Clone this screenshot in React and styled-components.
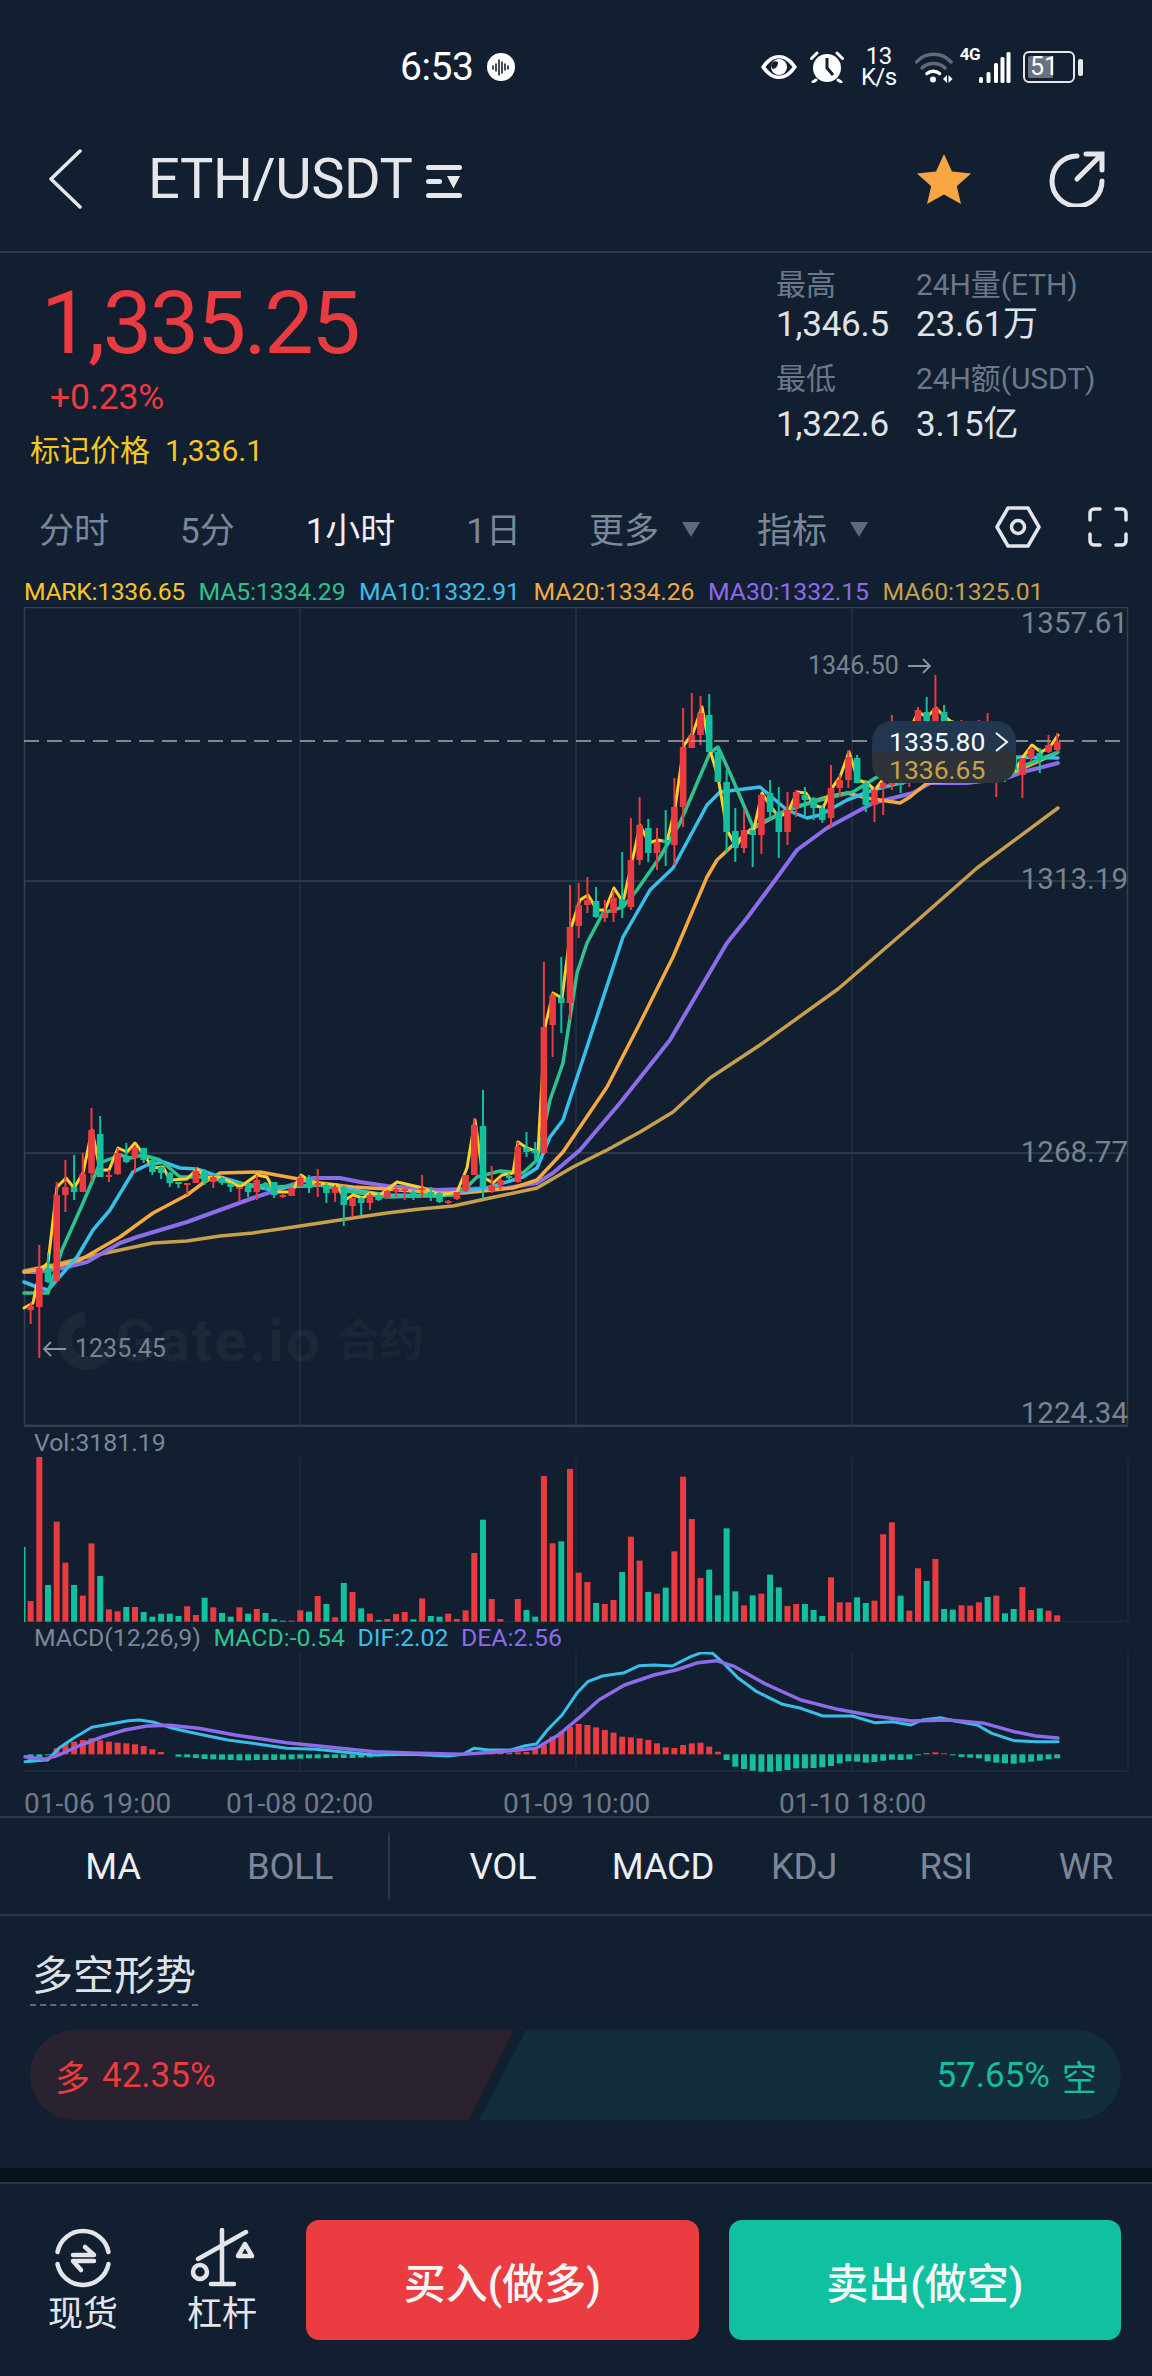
import React from 'react';
import styled, { createGlobalStyle } from 'styled-components';

const BG = '#121f30';
const LINE = '#2a3748';
const GRID = '#334052';
const FAINT = '#1e2b3d';
const MUTED = '#7b8798';
const TEXT = '#e3e5e8';
const RED = '#e93b40';
const GREEN = '#12bf9f';
const COLORS = { r: '#e93b40', g: '#13bf9d' };

const GlobalStyle = createGlobalStyle`
  html, body { margin: 0; padding: 0; background: ${BG}; }
  body {
    font-family: Roboto, "Noto Sans CJK SC", sans-serif;
    color: ${TEXT};
  }
`;

const Page = styled.div`
  width: 1152px;
  height: 2376px;
  overflow: hidden;
  background: ${BG};
  display: flex;
  flex-direction: column;
`;

/* status bar */
const StatusBar = styled.div`
  height: 112px;
  flex: none;
  display: flex;
  align-items: center;
  padding: 22px 69px 0 400px;
  box-sizing: border-box;
  color: #fff;
`;

const Clock = styled.span`
  font-size: 39px;
  line-height: 46px;
  letter-spacing: -0.4px;
`;

const StatusIcons = styled.div`
  margin-left: auto;
  display: flex;
  align-items: center;
`;

const Speed = styled.div`
  width: 36px;
  margin: 0 18px 0 17px;
  font-size: 24px;
  line-height: 21px;
  text-align: center;
  letter-spacing: -0.6px;
`;

const NetType = styled.span`
  font-size: 17px;
  font-weight: 700;
  line-height: 14px;
  align-self: flex-start;
  margin: 1px 0 0 7px;
  letter-spacing: -0.5px;
`;

const Battery = styled.div`
  width: 52px;
  height: 32px;
  margin-left: 12px;
  padding: 3px;
  box-sizing: border-box;
  border: 2.5px solid #e4e6e9;
  border-radius: 6px;
  display: flex;
`;

const BatteryLevel = styled.span`
  flex: 1;
  border-radius: 2px;
  background: linear-gradient(90deg, #687180 ${p => p.$level}%, transparent ${p => p.$level}%);
  font-size: 25px;
  line-height: 21px;
  padding-left: 2px;
`;

const BatteryTip = styled.span`
  width: 5px;
  height: 17px;
  margin-left: 3px;
  border-radius: 2px;
  background: #e4e6e9;
`;

/* title bar */
const Header = styled.header`
  height: 141px;
  flex: none;
  box-sizing: border-box;
  border-bottom: 2px solid ${LINE};
  display: flex;
  align-items: center;
  padding: 0 47px 6px 47px;
`;

const Title = styled.h1`
  margin: 0 13px 0 65px;
  font-size: 56px;
  font-weight: 400;
  letter-spacing: -0.4px;
  line-height: 64px;
  color: #e5e7ea;
`;

const HeaderActions = styled.div`
  margin-left: auto;
  display: flex;
  align-items: center;
  gap: 78px;
`;

/* price block */
const Ticker = styled.section`
  height: 244px;
  flex: none;
  display: flex;
  justify-content: space-between;
  box-sizing: border-box;
`;

const PriceColumn = styled.div`
  padding: 26px 0 0 30px;
`;

const Price = styled.div`
  font-size: 88px;
  line-height: 88px;
  letter-spacing: -2.5px;
  color: ${RED};
  margin-left: 11px;
`;

const Change = styled.div`
  font-size: 35.5px;
  line-height: 40px;
  color: ${RED};
  margin: 10px 0 0 20px;
  letter-spacing: -0.2px;
`;

const MarkPrice = styled.div`
  margin-top: 14px;
  font-size: 30px;
  line-height: 40px;
  color: #f6c623;
  display: flex;
  gap: 15px;
`;

const Stats = styled.div`
  width: 376px;
  padding-top: 12px;
  display: grid;
  grid-template-columns: 140px 1fr;
  grid-template-rows: 40px 40px 40px 40px;
`;

const StatLabel = styled.div`
  font-size: 30px;
  line-height: 40px;
  color: #6c7889;
  white-space: nowrap;
  margin-top: ${p => (p.$lower ? '14px' : '0')};
  letter-spacing: -0.1px;
`;

const StatValue = styled.div`
  font-size: 35px;
  line-height: 40px;
  color: #e0e3e6;
  white-space: nowrap;
  margin-top: ${p => (p.$lower ? '20px' : '0')};
  letter-spacing: -0.2px;
`;

/* period tabs */
const Tabs = styled.nav`
  height: 63px;
  flex: none;
  display: flex;
  align-items: center;
  gap: 71px;
  padding: 0 24px 3px 39px;
  box-sizing: border-box;
  font-size: 35px;
`;

const Tab = styled.span`
  color: ${p => (p.$active ? '#eceef0' : MUTED)};
  display: flex;
  align-items: center;
  margin-left: ${p => p.$shift || 0}px;
`;

const Caret = styled.i`
  width: 0;
  height: 0;
  margin: 4px 0 0 23px;
  border-left: 9.5px solid transparent;
  border-right: 9.5px solid transparent;
  border-top: 15px solid #5d6a7c;
`;

const TabTools = styled.div`
  margin-left: auto;
  display: flex;
  align-items: center;
  gap: 47px;
`;

/* MA legend */
const Legend = styled.div`
  height: 47px;
  flex: none;
  display: flex;
  align-items: flex-end;
  gap: 13.6px;
  padding-left: 24px;
  box-sizing: border-box;
  font-size: 24.8px;
  line-height: 30px;
  letter-spacing: -0.1px;
`;

const LegendItem = styled.span`
  color: ${p => p.$color};
  letter-spacing: ${p => p.$spacing || -0.1}px;
`;

/* charts */
const MainChart = styled.div`
  position: relative;
  height: 820px;
  flex: none;
`;

const ChartSvg = styled.svg`
  display: block;
  width: 1152px;
  height: ${p => p.$height}px;
`;

const AxisLabel = styled.span`
  position: absolute;
  right: 24px;
  top: ${p => p.$top}px;
  font-size: 29.5px;
  line-height: 32px;
  color: #78838f;
`;

const PriceNote = styled.span`
  position: absolute;
  left: ${p => p.$left}px;
  top: ${p => p.$top}px;
  font-size: 25px;
  line-height: 30px;
  color: #78838f;
  display: flex;
  align-items: center;
  gap: 9px;
  white-space: nowrap;
`;

const Watermark = styled.div`
  position: absolute;
  left: 55px;
  top: 704px;
  display: flex;
  align-items: center;
  color: rgba(255, 255, 255, 0.045);
  font-size: 60px;
  font-weight: 700;
  line-height: 60px;
  letter-spacing: 2px;
  gap: 4px;
`;

const WatermarkCn = styled.span`
  margin-left: 10px;
  font-size: 44px;
  letter-spacing: 0;
`;

const LastPrice = styled.div`
  position: absolute;
  left: 872px;
  top: 114px;
  width: 144px;
  border-radius: 20px;
  overflow: hidden;
  font-size: 26.5px;
  line-height: 21px;
`;

const LastRow = styled.div`
  height: 31px;
  box-sizing: border-box;
  display: flex;
  align-items: center;
  padding: ${p => p.$pad}px 0 0 17px;
  gap: 9px;
  background: ${p => p.$bg};
  color: ${p => p.$color};
`;

const PanelLabel = styled.div`
  height: ${p => p.$height}px;
  flex: none;
  display: flex;
  align-items: center;
  gap: 12.5px;
  padding-left: 34px;
  box-sizing: border-box;
  font-size: 24.8px;
  color: ${MUTED};
`;

const PanelValue = styled.span`
  color: ${p => p.$color};
`;

const TimeAxis = styled.div`
  height: 46px;
  flex: none;
  box-sizing: border-box;
  padding: 14px 0 0 24px;
  display: grid;
  grid-template-columns: 202px 277px 276px 1fr;
  font-size: 28px;
  line-height: 36px;
  color: #6f7b8b;
  border-bottom: 2px solid ${LINE};
`;

/* indicator switch */
const Indicators = styled.div`
  height: 98px;
  flex: none;
  box-sizing: border-box;
  padding-left: 24px;
  border-bottom: 2px solid ${LINE};
  display: grid;
  grid-template-columns: 178px 176px 38px 174px 146px 136px 148px 132px;
  align-items: center;
  font-size: 36.5px;
`;

const Indicator = styled.span`
  justify-self: center;
  letter-spacing: -0.3px;
  color: ${p => (p.$active ? '#eceef0' : MUTED)};
`;

const IndicatorDivider = styled.i`
  width: 2px;
  height: 66px;
  margin-left: 10px;
  background: ${LINE};
`;

/* long short */
const Sentiment = styled.section`
  height: 252px;
  flex: none;
  box-sizing: border-box;
  padding: 34px 31px 0 30px;
`;

const SentimentTitle = styled.h2`
  display: inline-block;
  margin: 0;
  padding: 0 2px 2px;
  font-size: 41px;
  font-weight: 400;
  line-height: 52px;
  color: #dfe2e6;
  border-bottom: 2px dashed #5f6b7c;
`;

const RatioBar = styled.div`
  margin-top: 24px;
  height: 90px;
  display: flex;
  font-size: 35px;
`;

const RatioLong = styled.div`
  width: 484px;
  flex: none;
  display: flex;
  align-items: center;
  gap: 12px;
  padding-left: 25px;
  box-sizing: border-box;
  border-radius: 45px 0 0 45px;
  background: #2a222f;
  color: ${RED};
  clip-path: polygon(0 0, 100% 0, calc(100% - 45px) 100%, 0 100%);
`;

const RatioShort = styled.div`
  flex: 1;
  margin-left: -35px;
  display: flex;
  align-items: center;
  justify-content: flex-end;
  gap: 12px;
  padding-right: 24px;
  border-radius: 0 45px 45px 0;
  background: #122d3b;
  color: ${GREEN};
  clip-path: polygon(47px 0, 100% 0, 100% 100%, 0 100%);
`;

/* bottom bar */
const Strip = styled.div`
  height: 14px;
  flex: none;
  background: #07121f;
  border-bottom: 2px solid ${LINE};
`;

const Footer = styled.footer`
  flex: 1;
  display: flex;
  align-items: flex-start;
  padding: 36px 31px 0 0;
`;

const FooterLinks = styled.div`
  display: flex;
  flex: none;
  padding: 8px 0 0 47px;
  margin-right: 48px;
  gap: 67px;
`;

const FooterLink = styled.div`
  width: 72px;
  display: flex;
  flex-direction: column;
  align-items: center;
  font-size: 35px;
  line-height: 40px;
  color: #e3e5e8;
  gap: 7px;
`;

const TradeButton = styled.button`
  flex: 1;
  height: 120px;
  border: 0;
  border-radius: 13px;
  padding: 0;
  background: ${p => p.$bg};
  color: #f4f6f6;
  font-family: inherit;
  font-size: 42px;
  font-weight: 500;
  & + & { margin-left: 30px; }
`;

/* candles: [wick top, wick bottom, body top, body bottom, side], y in page pixels */
const CANDLES = [
  [1303,1324,1306,1310,'r'],[1245,1358,1268,1307,'r'],[1253,1283,1268,1282,'g'],[1182,1282,1195,1281,'r'],
  [1160,1212,1187,1195,'r'],[1155,1200,1187,1192,'g'],[1153,1192,1174,1192,'r'],[1108,1182,1130,1173,'r'],
  [1116,1177,1134,1177,'g'],[1170,1182,1175,1177,'r'],[1148,1175,1153,1174,'r'],[1143,1163,1157,1162,'g'],
  [1145,1173,1148,1158,'r'],[1148,1163,1148,1160,'g'],[1158,1175,1160,1172,'g'],[1165,1179,1167,1173,'g'],
  [1172,1187,1173,1183,'g'],[1182,1188,1182,1184,'g'],[1183,1195,1183,1185,'r'],[1167,1183,1171,1183,'r'],
  [1169,1185,1172,1182,'g'],[1175,1188,1177,1182,'r'],[1177,1185,1178,1183,'g'],[1183,1192,1184,1187,'g'],
  [1187,1202,1187,1189,'r'],[1183,1197,1187,1192,'g'],[1175,1200,1180,1192,'r'],[1182,1190,1183,1187,'g'],
  [1182,1198,1182,1195,'g'],[1193,1198,1195,1197,'r'],[1188,1196,1188,1196,'r'],[1175,1187,1178,1186,'r'],
  [1175,1193,1177,1188,'g'],[1169,1197,1183,1185,'r'],[1183,1203,1185,1193,'g'],[1185,1202,1187,1193,'r'],
  [1185,1226,1187,1205,'g'],[1198,1217,1198,1206,'r'],[1197,1215,1198,1203,'g'],[1193,1210,1195,1203,'r'],
  [1193,1201,1195,1200,'g'],[1190,1198,1191,1198,'r'],[1188,1197,1189,1191,'r'],[1188,1200,1189,1191,'r'],
  [1190,1200,1192,1197,'g'],[1175,1198,1188,1190,'r'],[1187,1201,1192,1195,'g'],[1192,1203,1193,1202,'g'],
  [1200,1204,1201,1203,'r'],[1192,1200,1192,1199,'r'],[1175,1192,1175,1191,'r'],[1118,1175,1125,1175,'r'],
  [1090,1199,1126,1188,'g'],[1166,1193,1186,1191,'r'],[1178,1190,1180,1185,'r'],[1173,1180,1176,1177,'g'],
  [1142,1183,1147,1182,'r'],[1132,1157,1148,1152,'g'],[1142,1163,1150,1153,'g'],[962,1153,1027,1153,'r'],
  [993,1057,995,1025,'r'],[957,1033,998,1003,'g'],[885,1020,927,1003,'r'],[883,938,905,926,'r'],
  [877,913,900,905,'r'],[887,918,901,917,'g'],[900,922,913,918,'r'],[890,922,898,913,'r'],
  [852,918,899,907,'g'],[818,910,860,907,'r'],[797,865,825,860,'r'],[819,862,828,853,'g'],
  [828,870,842,853,'r'],[810,866,840,843,'g'],[778,865,807,845,'r'],[708,827,747,807,'r'],
  [693,748,735,748,'r'],[696,745,713,735,'r'],[694,752,715,752,'g'],[747,782,752,782,'g'],
  [770,853,782,832,'g'],[808,862,831,848,'g'],[810,853,830,848,'r'],[830,867,830,835,'g'],
  [794,854,795,835,'r'],[780,820,793,812,'g'],[787,858,812,832,'g'],[792,845,810,832,'r'],
  [790,817,792,808,'r'],[787,817,795,800,'g'],[797,820,798,808,'g'],[805,823,808,820,'g'],
  [765,828,788,818,'r'],[775,797,780,788,'r'],[750,788,757,780,'r'],[755,783,758,783,'g'],
  [780,812,783,805,'g'],[787,822,790,805,'r'],[780,815,783,788,'r'],[715,790,730,785,'r'],
  [740,793,750,785,'g'],[760,787,765,780,'r'],[707,745,710,722,'r'],[697,745,712,722,'g'],
  [675,745,708,722,'r'],[705,745,712,722,'g'],[720,760,725,750,'g'],[720,770,730,760,'r'],
  [730,765,735,755,'r'],[720,760,730,750,'r'],[713,755,725,745,'r'],[750,797,755,770,'r'],
  [755,782,760,775,'g'],[750,775,755,770,'g'],[758,798,758,775,'r'],[747,762,749,758,'r'],
  [748,773,753,760,'g'],[735,753,745,752,'r'],[733,752,742,750,'r'],
];

const candleX = i => 30.6 + 8.7 * i;

const MA60 = [[24,1271],[53,1265],[87,1257],[120,1250],[153,1243],[187,1241],[220,1236],[253,1233],[287,1228],[320,1223],[353,1218],[387,1213],[420,1209],[453,1206],[490,1198],[537,1188],[573,1167],[607,1150],[640,1132],[673,1112],[710,1078],[760,1045],[838,989],[918,920],[977,868],[1058,808]];
const MA30 = [[24,1272],[37,1272],[63,1268],[87,1262],[120,1243],[137,1237],[187,1222],[220,1210],[253,1198],[277,1190],[297,1183],[313,1178],[340,1178],[360,1182],[387,1186],[437,1190],[463,1189],[507,1188],[537,1183],[553,1173],[580,1150],[620,1103],[670,1040],[707,977],[727,943],[747,918],[773,883],[797,850],[827,828],[873,803],[913,793],[930,783],[967,783],[1007,778],[1023,772],[1058,763]];
const MA20 = [[24,1272],[53,1267],[80,1260],[120,1237],[153,1213],[187,1195],[203,1183],[220,1173],[260,1172],[293,1178],[320,1183],[353,1187],[387,1189],[437,1193],[463,1193],[513,1188],[537,1180],[563,1152],[607,1087],[640,1023],[673,957],[707,877],[717,860],[733,845],[750,830],[787,810],[827,797],[847,793],[867,798],[900,803],[910,797],[927,783],[1003,777],[1057,753]];
const MA10 = [[24,1282],[37,1287],[48,1290],[63,1273],[77,1257],[93,1230],[110,1210],[133,1172],[147,1165],[163,1162],[180,1168],[197,1169],[220,1177],[247,1185],[273,1190],[287,1187],[320,1185],[353,1190],[387,1195],[437,1196],[453,1193],[487,1188],[523,1177],[537,1168],[550,1137],[563,1120],[587,1047],[623,937],[650,890],[673,868],[707,805],[720,792],[760,787],[787,810],[807,818],[820,815],[847,800],[873,790],[900,783],[1020,757],[1058,758]];
const MA5 = [[24,1293],[48,1293],[62,1250],[83,1203],[100,1163],[120,1155],[130,1158],[143,1155],[160,1160],[180,1177],[207,1177],[233,1183],[273,1187],[320,1185],[353,1192],[387,1197],[453,1195],[467,1187],[477,1177],[500,1171],[523,1173],[537,1160],[550,1100],[563,1063],[577,973],[587,943],[603,913],[623,907],[637,890],[660,857],[680,823],[710,753],[718,747],[730,773],[753,827],[787,810],[820,800],[853,792],[877,777],[1013,770],[1058,752]];
const MARK = [[24,1308],[33,1303],[40,1270],[48,1263],[57,1187],[66,1178],[74,1188],[83,1173],[92,1130],[100,1170],[109,1170],[118,1148],[127,1152],[135,1143],[144,1155],[153,1168],[163,1167],[170,1180],[187,1179],[197,1169],[205,1177],[223,1178],[240,1187],[257,1175],[267,1177],[275,1192],[292,1192],[301,1175],[313,1183],[337,1185],[345,1200],[353,1195],[363,1198],[370,1193],[380,1195],[397,1182],[423,1188],[440,1195],[457,1192],[467,1168],[475,1120],[483,1177],[493,1183],[502,1175],[513,1173],[518,1142],[527,1148],[538,1152],[545,1027],[553,993],[562,998],[571,928],[580,900],[588,895],[597,910],[605,910],[614,888],[623,902],[632,862],[640,825],[649,843],[658,840],[667,842],[675,808],[684,745],[693,733],[702,707],[710,750],[718,777],[727,830],[736,847],[745,832],[753,833],[762,793],[771,807],[779,817],[788,812],[797,792],[806,793],[814,805],[823,808],[832,788],[840,777],[849,752],[858,780],[867,783],[875,790],[884,778],[893,767],[918,712],[927,717],[936,708],[945,717],[1015,770],[1023,757],[1032,745],[1041,752],[1050,747],[1058,735]];

// volume tops and macd values were read at 3x of the panel
const VOL_TOPS = [543,110,495,305,428,495,527,370,468,568,574,561,561,576,590,581,581,588,559,585,533,562,579,590,562,581,567,579,597,602,602,571,575,528,552,592,489,516,565,581,600,597,582,576,598,535,588,590,581,597,571,399,299,537,597,605,537,570,590,168,370,364,147,458,486,549,552,540,456,350,422,516,521,503,394,170,297,474,449,526,325,514,556,526,521,464,502,558,552,552,570,588,472,547,547,532,549,542,343,307,527,572,445,483,417,567,569,556,557,547,531,527,580,567,501,570,565,572,586];
const VOL_GREEN = new Set([2,5,8,11,13,14,15,16,17,20,22,23,25,27,28,29,32,34,36,38,40,44,46,47,52,57,58,61,65,68,71,73,78,79,80,81,83,85,86,89,90,91,95,96,100,103,105,106,110,112,113,116]);

const MACD_TOPS = [1020,1018,1006,985,972,965,960,955,961,965,968,970,973,978,988,996,1003,1010,1012,1014,1017,1018,1019,1020,1021,1021,1020,1020,1020,1019,1018,1016,1015,1015,1014,1014,1014,1014,1013,1012,1009,1008,1007,1005,1005,1005,1005,1005,1005,1005,1005,1003,1000,999,998,998,997,996,990,975,950,935,920,912,915,922,930,938,950,952,955,960,970,982,984,975,970,968,980,995,1020,1040,1047,1052,1055,1055,1053,1050,1045,1045,1044,1042,1038,1030,1024,1025,1028,1026,1022,1019,1020,1018,1006,999,997,1000,1006,1011,1013,1015,1024,1028,1030,1031,1028,1025,1022,1018,1015];

const DIF = [[34,1025],[50,1022],[65,1020],[80,985],[100,955],[125,922],[150,912],[175,902],[190,900],[210,907],[235,925],[270,942],[310,960],[350,972],[390,985],[430,988],[470,997],[510,1005],[560,1003],[610,1008],[630,1003],[645,985],[665,990],[695,990],[715,977],[730,972],[745,930],[765,885],[785,820],[800,785],[820,768],[850,758],[870,737],[890,735],[915,738],[940,710],[955,698],[970,700],[985,730],[1005,775],[1030,815],[1065,853],[1090,865],[1120,888],[1160,888],[1190,908],[1215,905],[1240,915],[1255,900],[1280,893],[1300,903],[1330,915],[1350,940],[1380,962],[1410,965],[1440,965]];
const DEA = [[34,1010],[60,1018],[80,1005],[110,975],[140,950],[170,930],[200,918],[230,916],[270,925],[320,945],[390,968],[450,982],[510,995],[570,1000],[630,1003],[680,995],[730,985],[760,945],[790,890],[815,840],[850,795],[890,765],[920,750],[950,728],[975,722],[1000,740],[1040,790],[1090,840],[1140,868],[1190,888],[1240,903],[1290,900],[1340,910],[1380,935],[1410,948],[1440,954]];

const panelPoint = ([x, y]) => [x / 1.361, 1420 + y / 3];
const toPoints = pts => pts.map(p => p.join(',')).join(' ');

const Line = ({ points, color, width = 3.5 }) => (
  <polyline points={toPoints(points)} fill="none" stroke={color} strokeWidth={width} strokeLinejoin="round" strokeLinecap="round" />
);

const VerticalGrid = ({ top, bottom, color }) => (
  <>
    {[300, 576, 852].map(x => <line key={x} x1={x} x2={x} y1={top} y2={bottom} stroke={color} strokeWidth="1.5" />)}
  </>
);

const CandleChart = () => (
  <ChartSvg $height={820} viewBox="0 607 1152 820">
    <VerticalGrid top={607} bottom={1426} color="#243144" />
    <rect x="24.5" y="607.5" width="1103" height="818" fill="none" stroke={GRID} strokeWidth="1.5" />
    <line x1="24" x2="1128" y1="881" y2="881" stroke={GRID} strokeWidth="1.5" />
    <line x1="24" x2="1128" y1="1153" y2="1153" stroke={GRID} strokeWidth="1.5" />
    <line x1="24" x2="1128" y1="1426" y2="1426" stroke={GRID} strokeWidth="2.5" />
    <Line points={MA60} color="#c7a04c" />
    <Line points={MA30} color="#8c6ce9" width={4} />
    <Line points={MA20} color="#f5a93e" />
    <Line points={MA10} color="#37c0e9" />
    <Line points={MA5} color="#2ec28e" />
    <Line points={MARK} color="#fdd02c" width={3} />
    {CANDLES.map(([wt, wb, bt, bb, side], i) => (
      <g key={i} fill={COLORS[side]}>
        <rect x={candleX(i) - 1} y={wt} width="2" height={wb - wt} />
        <rect x={candleX(i) - 3.3} y={bt} width="6.6" height={Math.max(bb - bt, 2)} />
      </g>
    ))}
    <line x1="24" x2="1124" y1="741" y2="741" stroke="#a3aab2" strokeWidth="1.5" strokeDasharray="15 8" />
  </ChartSvg>
);

const VolumeChart = () => (
  <ChartSvg $height={165} viewBox="0 1457 1152 165">
    <VerticalGrid top={1457} bottom={1622} color={FAINT} />
    <line x1="1128" x2="1128" y1="1457" y2="1622" stroke={FAINT} strokeWidth="1.5" />
    <line x1="24" x2="1128" y1="1621.5" y2="1621.5" stroke={FAINT} strokeWidth="1.5" />
    <rect x="24" y="1547" width="1.5" height="75" fill={COLORS.g} />
    {VOL_TOPS.map((t, i) => (
      <rect key={i} x={candleX(i) - 3} y={1420 + t / 3} width="6" height={(605 - t) / 3} fill={VOL_GREEN.has(i) ? COLORS.g : COLORS.r} />
    ))}
  </ChartSvg>
);

const MacdChart = () => (
  <ChartSvg $height={120} viewBox="0 1652 1152 120">
    <VerticalGrid top={1652} bottom={1772} color={FAINT} />
    <line x1="1128" x2="1128" y1="1652" y2="1772" stroke={FAINT} strokeWidth="1.5" />
    <line x1="24" x2="1128" y1="1771" y2="1771" stroke={FAINT} strokeWidth="2" />
    {MACD_TOPS.map((t, i) => {
      const y = 1420 + t / 3;
      const zero = 1420 + 1003 / 3;
      return (
        <rect
          key={i}
          x={candleX(i) - 3}
          y={Math.min(y, zero)}
          width="6"
          height={Math.abs(y - zero)}
          fill={t > 1003 ? COLORS.g : COLORS.r}
        />
      );
    })}
    <Line points={DIF.map(panelPoint)} color="#37bfe8" width={3} />
    <Line points={DEA.map(panelPoint)} color="#8c6ce9" />
  </ChartSvg>
);

/* icons */
const EyeIcon = () => (
  <svg width="38" height="26" viewBox="0 0 38 26">
    <path d="M1 13C7 4 13 1 19 1s12 3 18 12c-6 9-12 12-18 12S7 22 1 13z" fill="#fff" />
    <path d="M5.500 13C10 7 14 4.500 19 4.500S28 7 32.500 13C28 19 24 21.500 19 21.500S10 19 5.500 13z" fill={BG} />
    <circle cx="19" cy="13" r="8" fill="#fff" />
    <path d="M13 15a6 6 0 0 0 5-7 4 4 0 0 0-5 7z" fill={BG} />
  </svg>
);

const AlarmIcon = () => (
  <svg width="34" height="32" viewBox="0 0 34 32" style={{ marginLeft: 12 }}>
    <circle cx="17" cy="17" r="14" fill="#fff" />
    <path d="M17 7v10l6 7" fill="none" stroke={BG} strokeWidth="3" />
    <path d="M1.500 7.500 7 2M32.500 7.500 27 2M6 29l-3 2M28 29l3 2" stroke="#fff" strokeWidth="3" strokeLinecap="round" />
  </svg>
);

const WifiIcon = () => (
  <svg width="38" height="31" viewBox="0 0 38 31">
    <path d="M1.500 10C10-.5 27-.5 36 10" fill="none" stroke="#5f6978" strokeWidth="3.500" strokeLinecap="round" />
    <path d="M7 16c6-6 17-6 23 0" fill="none" stroke="#5f6978" strokeWidth="3.500" strokeLinecap="round" />
    <path d="M12 21.500c3.500-3 9-3 12.500 0" fill="none" stroke="#fff" strokeWidth="3.500" strokeLinecap="round" />
    <circle cx="18" cy="27.500" r="3" fill="#fff" />
    <path d="M28 27l4-4v8zM33.500 23l4 4-4 4z" fill="#fff" />
  </svg>
);

const SignalIcon = () => (
  <svg width="33" height="31" viewBox="0 0 33 31" style={{ marginLeft: -2 }}>
    {[[1, 6], [8.500, 11], [16, 20], [22.500, 26], [28.500, 31]].map(([x, h]) => (
      <rect key={x} x={x} y={31 - h} width="4" height={h} rx="1.500" fill="#fff" />
    ))}
  </svg>
);

const VoiceBadge = () => (
  <svg width="28" height="28" viewBox="0 0 28 28" style={{ marginLeft: 13 }}>
    <circle cx="14" cy="14" r="14" fill="#fff" />
    <path d="M6 13v3M9 11v7M12 7v15M15 9v11M18 11v6M21 13v3" stroke={BG} strokeWidth="1.600" strokeLinecap="round" />
  </svg>
);

const BackIcon = () => (
  <svg width="36" height="60" viewBox="0 0 36 60">
    <path d="M33 2 4 30l29 28" fill="none" stroke="#e6e8eb" strokeWidth="3.500" strokeLinecap="round" strokeLinejoin="round" />
  </svg>
);

const MarketMenuIcon = () => (
  <svg width="37" height="36" viewBox="0 0 37 36" style={{ marginTop: 4 }}>
    <rect x="0" y="2" width="36" height="5" rx="2.500" fill="#e6e8eb" />
    <rect x="0" y="16" width="16" height="5" rx="2.500" fill="#e6e8eb" />
    <rect x="0" y="30" width="36" height="5" rx="2.500" fill="#e6e8eb" />
    <path d="M21 13h13l-6.500 12.500z" fill="#e6e8eb" />
  </svg>
);

const StarIcon = () => (
  <svg width="54" height="50" viewBox="0 0 54 50">
    <path d="M27 0l8 17.500 19 2-14.200 12.800L44 50 27 40.500 10 50l4.200-17.700L0 19.500l19-2z" fill="#f7a643" />
  </svg>
);

const ShareIcon = () => (
  <svg width="56" height="56" viewBox="0 0 56 56">
    <path d="M28 5A25 25 0 1 0 53 30" fill="none" stroke="#e4e6e9" strokeWidth="5" strokeLinecap="round" />
    <path d="M28 28 52 4M37 3h16v16" fill="none" stroke="#e4e6e9" strokeWidth="5" strokeLinecap="round" />
  </svg>
);

const HexIcon = () => (
  <svg width="46" height="42" viewBox="0 0 46 42">
    <path d="M13 2h20l11 19-11 19H13L2 21z" fill="none" stroke="#e4e6e9" strokeWidth="3.500" strokeLinejoin="round" />
    <circle cx="23" cy="21" r="6.500" fill="none" stroke="#e4e6e9" strokeWidth="3.500" />
  </svg>
);

const ExpandIcon = () => (
  <svg width="40" height="40" viewBox="0 0 40 40" fill="none" stroke="#e4e6e9" strokeWidth="3.500" strokeLinecap="round">
    <path d="M12 2H6a4 4 0 0 0-4 4v7" />
    <path d="M28 2h6a4 4 0 0 1 4 4v7" />
    <path d="M12 38H6a4 4 0 0 1-4-4v-7" />
    <path d="M28 38h6a4 4 0 0 0 4-4v-7" />
  </svg>
);

const ArrowGlyph = ({ left }) => (
  <svg width="24" height="16" viewBox="0 0 24 16" fill="none" stroke="#8a94a2" strokeWidth="1.800">
    {left ? <path d="M24 8H2M9 1 2 8l7 7" /> : <path d="M0 8h22M15 1l7 7-7 7" />}
  </svg>
);

const Chevron = () => (
  <svg width="15" height="20" viewBox="0 0 15 20" fill="none" stroke="#fff" strokeWidth="2">
    <path d="M2 1l11 9-11 9" />
  </svg>
);

const GateArc = () => (
  <svg width="56" height="60" viewBox="0 0 56 60">
    <path d="M30 8a22 22 0 1 0 22 30" fill="none" stroke="rgba(255,255,255,0.045)" strokeWidth="14" />
  </svg>
);

const SpotIcon = () => (
  <svg width="60" height="60" viewBox="0 0 60 60" fill="none" stroke="#e3e5e8" strokeWidth="4.500" strokeLinecap="round" strokeLinejoin="round">
    <path d="M4.500 24a26 26 0 0 1 51 0" />
    <path d="M4.500 36a26 26 0 0 0 51 0" />
    <path d="M20 27h21l-9-8" />
    <path d="M41 33H20l8 9" />
  </svg>
);

const LeverIcon = () => (
  <svg width="68" height="60" viewBox="-2 0 68 60" fill="none" stroke="#e3e5e8" strokeWidth="4.500" strokeLinecap="round" strokeLinejoin="round">
    <path d="M32 2v54M21 56h23M8 31 56 4" />
    <circle cx="10" cy="44" r="7" />
    <path d="M55 16l-7 12h14z" />
  </svg>
);

export default function App() {
  return (
    <Page>
      <GlobalStyle />
      <StatusBar>
        <Clock>6:53</Clock>
        <VoiceBadge />
        <StatusIcons>
          <EyeIcon />
          <AlarmIcon />
          <Speed>13<br />K/s</Speed>
          <WifiIcon />
          <NetType>4G</NetType>
          <SignalIcon />
          <Battery>
            <BatteryLevel $level={60}>51</BatteryLevel>
          </Battery>
          <BatteryTip />
        </StatusIcons>
      </StatusBar>

      <Header>
        <BackIcon />
        <Title>ETH/USDT</Title>
        <MarketMenuIcon />
        <HeaderActions>
          <StarIcon />
          <ShareIcon />
        </HeaderActions>
      </Header>

      <Ticker>
        <PriceColumn>
          <Price>1,335.25</Price>
          <Change>+0.23%</Change>
          <MarkPrice><span>标记价格</span><span>1,336.1</span></MarkPrice>
        </PriceColumn>
        <Stats>
          <StatLabel>最高</StatLabel>
          <StatLabel>24H量(ETH)</StatLabel>
          <StatValue>1,346.5</StatValue>
          <StatValue>23.61万</StatValue>
          <StatLabel $lower>最低</StatLabel>
          <StatLabel $lower>24H额(USDT)</StatLabel>
          <StatValue $lower>1,322.6</StatValue>
          <StatValue $lower>3.15亿</StatValue>
        </Stats>
      </Ticker>

      <Tabs>
        <Tab>分时</Tab>
        <Tab>5分</Tab>
        <Tab $active>1小时</Tab>
        <Tab>1日</Tab>
        <Tab $shift={-3}>更多<Caret /></Tab>
        <Tab $shift={-14}>指标<Caret /></Tab>
        <TabTools>
          <HexIcon />
          <ExpandIcon />
        </TabTools>
      </Tabs>

      <Legend>
        <LegendItem $color="#f6c623" $spacing={-0.35}>MARK:1336.65</LegendItem>
        <LegendItem $color="#2ec28e">MA5:1334.29</LegendItem>
        <LegendItem $color="#37c0e9">MA10:1332.91</LegendItem>
        <LegendItem $color="#f5a93e">MA20:1334.26</LegendItem>
        <LegendItem $color="#8c6ce9">MA30:1332.15</LegendItem>
        <LegendItem $color="#c7a04c">MA60:1325.01</LegendItem>
      </Legend>

      <MainChart>
        <Watermark>
          <GateArc />
          <span>Gate.io</span>
          <WatermarkCn>合约</WatermarkCn>
        </Watermark>
        <CandleChart />
        <AxisLabel $top={0}>1357.61</AxisLabel>
        <AxisLabel $top={256}>1313.19</AxisLabel>
        <AxisLabel $top={529}>1268.77</AxisLabel>
        <AxisLabel $top={790}>1224.34</AxisLabel>
        <PriceNote $left={808} $top={44}>1346.50 <ArrowGlyph /></PriceNote>
        <PriceNote $left={42} $top={727}><ArrowGlyph left />1235.45</PriceNote>
        <LastPrice>
          <LastRow $bg="#22364f" $color="#fff" $pad={10}>1335.80 <Chevron /></LastRow>
          <LastRow $bg="#2e3338" $color="#c7a04c" $pad={3}>1336.65</LastRow>
        </LastPrice>
      </MainChart>

      <PanelLabel $height={30}>Vol:3181.19</PanelLabel>
      <VolumeChart />
      <PanelLabel $height={30}>
        MACD(12,26,9)
        <PanelValue $color="#2ec28e">MACD:-0.54</PanelValue>
        <PanelValue $color="#37c0e9">DIF:2.02</PanelValue>
        <PanelValue $color="#8c6ce9">DEA:2.56</PanelValue>
      </PanelLabel>
      <MacdChart />

      <TimeAxis>
        <span>01-06 19:00</span>
        <span>01-08 02:00</span>
        <span>01-09 10:00</span>
        <span>01-10 18:00</span>
      </TimeAxis>

      <Indicators>
        <Indicator $active>MA</Indicator>
        <Indicator>BOLL</Indicator>
        <IndicatorDivider />
        <Indicator $active>VOL</Indicator>
        <Indicator $active>MACD</Indicator>
        <Indicator>KDJ</Indicator>
        <Indicator>RSI</Indicator>
        <Indicator>WR</Indicator>
      </Indicators>

      <Sentiment>
        <SentimentTitle>多空形势</SentimentTitle>
        <RatioBar>
          <RatioLong><span>多</span><span>42.35%</span></RatioLong>
          <RatioShort><span>57.65%</span><span>空</span></RatioShort>
        </RatioBar>
      </Sentiment>

      <Strip />
      <Footer>
        <FooterLinks>
          <FooterLink><SpotIcon />现货</FooterLink>
          <FooterLink><LeverIcon />杠杆</FooterLink>
        </FooterLinks>
        <TradeButton $bg="#eb3c41">买入(做多)</TradeButton>
        <TradeButton $bg="#0fc0a1">卖出(做空)</TradeButton>
      </Footer>
    </Page>
  );
}
